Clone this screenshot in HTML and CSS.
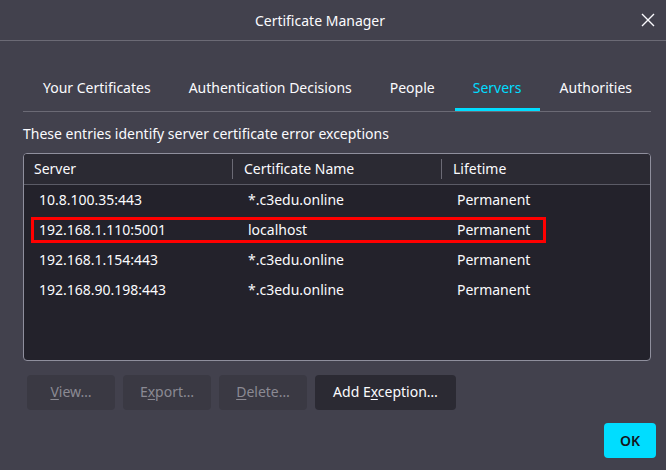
FILE: index.html
```html
<!DOCTYPE html>
<html>
<head>
<meta charset="utf-8">
<link rel="stylesheet" href="styles.css">
</head>
<body>
<div class="window">
  <header class="titlebar">
    <span></span>
    <span class="title">Certificate Manager</span>
    <button class="close" aria-label="Close">
      <svg width="14" height="14" viewBox="0 0 14 14"><path d="M1 1L13 13M13 1L1 13" stroke="#fbfbfe" stroke-width="1.4" fill="none"/></svg>
    </button>
  </header>
  <main class="content">
    <nav class="tabs">
      <div class="tab">Your Certificates</div>
      <div class="tab">Authentication Decisions</div>
      <div class="tab">People</div>
      <div class="tab active">Servers</div>
      <div class="tab">Authorities</div>
    </nav>
    <p class="desc">These entries identify server certificate error exceptions</p>
    <div class="table">
      <div class="thead">
        <div class="th">Server</div>
        <div class="th sep">Certificate Name</div>
        <div class="th sep">Lifetime</div>
      </div>
      <div class="row"><div class="td">10.8.100.35:443</div><div class="td">*.c3edu.online</div><div class="td">Permanent</div></div>
      <div class="row"><div class="td">192.168.1.110:5001</div><div class="td">localhost</div><div class="td">Permanent</div></div>
      <div class="row"><div class="td">192.168.1.154:443</div><div class="td">*.c3edu.online</div><div class="td">Permanent</div></div>
      <div class="row"><div class="td">192.168.90.198:443</div><div class="td">*.c3edu.online</div><div class="td">Permanent</div></div>
      <div class="highlight"></div>
    </div>
    <div class="actions">
      <button class="btn disabled"><u>V</u>iew…</button>
      <button class="btn disabled">E<u>x</u>port…</button>
      <button class="btn disabled"><u>D</u>elete…</button>
      <button class="btn primary">Add E<u>x</u>ception…</button>
    </div>
  </main>
  <footer class="footer">
    <button class="ok">OK</button>
  </footer>
</div>
</body>
</html>
```
FILE: styles.css
```css
* { box-sizing: border-box; }
html, body { margin: 0; padding: 0; }
body {
  width: 666px;
  height: 470px;
  overflow: hidden;
  background: #42414d;
  font-family: "Noto Sans", "DejaVu Sans", sans-serif;
  font-size: 14px;
  color: #fbfbfe;
}
.window {
  width: 666px;
  height: 470px;
  display: flex;
  flex-direction: column;
}
.titlebar {
  height: 41px;
  display: grid;
  grid-template-columns: 1fr auto 1fr;
  align-items: center;
  border-bottom: 1px solid #6b6a75;
}
.title {
  font-size: 14px;
  margin-right: 26px;
}
.close {
  justify-self: end;
  margin-right: 10px;
  width: 16px;
  height: 16px;
  padding: 0;
  border: 0;
  background: transparent;
  display: flex;
  align-items: center;
  justify-content: center;
}
.content {
  padding: 26px 15px 0 23px;
  display: flex;
  flex-direction: column;
}
.tabs {
  display: flex;
  gap: 2px;
  padding-left: 2px;
  border-bottom: 1px solid #6b6a75;
  height: 45px;
}
.tab {
  padding: 0 18px;
  height: 44px;
  white-space: nowrap;
  border-bottom: 3px solid transparent;
  display: flex;
  align-items: center;
}
.tab.active {
  color: #00ddff;
  border-bottom-color: #00ddff;
  margin-bottom: -1px;
}
.desc {
  margin: 12px 0 0;
  line-height: 19px;
}
.table {
  position: relative;
  margin-top: 10px;
  height: 208px;
  background: #23222b;
  border: 1px solid #8f8f9d;
  border-radius: 4px;
  overflow: hidden;
}
.thead {
  display: grid;
  grid-template-columns: 208px 209px 1fr;
  height: 31px;
  align-items: center;
  background: #2b2a33;
  border-bottom: 1px solid #5b5b66;
}
.th {
  padding-left: 10px;
  line-height: 20px;
}
.th.sep {
  border-left: 1px solid #6b6a75;
  padding-left: 11px;
}
.row {
  display: grid;
  grid-template-columns: 208px 209px 1fr;
  height: 30px;
  align-items: center;
  padding-bottom: 2px;
}
.td {
  padding-left: 15px;
}
.row .td:nth-child(2), .row .td:nth-child(3) { padding-left: 16px; }
.highlight {
  position: absolute;
  left: 7px;
  top: 63px;
  width: 515px;
  height: 26px;
  border: 3px solid #ff0000;
  pointer-events: none;
}
.actions {
  display: flex;
  gap: 8px;
  margin-top: 14px;
  padding-left: 4px;
}
.btn {
  height: 35px;
  border: 0;
  border-radius: 4px;
  font-family: inherit;
  font-size: 14px;
  padding: 0 16px 2px;
}
.btn.disabled {
  width: 88px;
  background: #3a3943;
  color: #8b8a93;
}
.btn.primary {
  width: 141px;
  background: #2b2a33;
  color: #fbfbfe;
}
.btn u { text-underline-offset: 2px; }
.footer {
  margin-top: auto;
  display: flex;
  justify-content: flex-end;
  padding: 0 10px 12px 0;
}
.ok {
  width: 52px;
  height: 35px;
  border: 0;
  border-radius: 4px;
  background: #00ddff;
  color: #15141a;
  font-family: inherit;
  font-size: 14px;
  font-weight: 600;
}
```
